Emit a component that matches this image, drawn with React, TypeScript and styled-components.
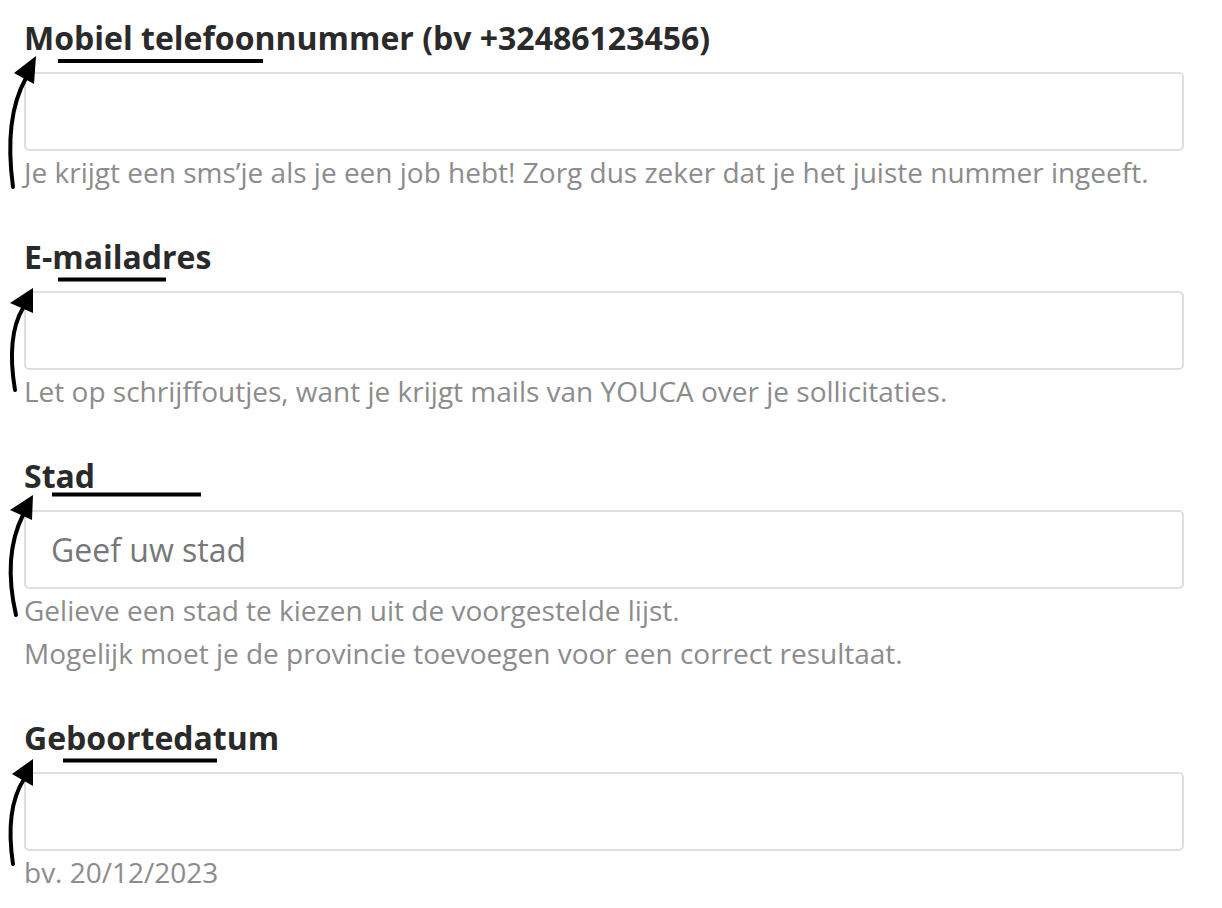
import React from "react";
import styled, { createGlobalStyle } from "styled-components";

const GlobalStyle = createGlobalStyle`
  html, body { margin: 0; padding: 0; background: #ffffff; }
  body { font-family: "Open Sans", "Noto Sans", sans-serif; }
  * { box-sizing: border-box; }
`;

const Page = styled.div`
  width: 1222px;
  padding: 20px 38px 0 24px;
  display: flex;
  flex-direction: column;
  gap: 45px;
`;

const Field = styled.div`
  position: relative;
  display: flex;
  flex-direction: column;
`;

const Label = styled.label`
  font-size: 32px;
  line-height: 36px;
  font-weight: 700;
  color: #2a2a2a;
  margin-bottom: 16px;
  white-space: nowrap;
`;

const Input = styled.input`
  height: 79px;
  width: 100%;
  border: 2px solid #dfdfdf;
  border-radius: 5px;
  padding: 0 25px;
  font-family: "Open Sans", "Noto Sans", sans-serif;
  font-size: 32px;
  color: #333;
  background: #fff;
  outline: none;
  &::placeholder { color: #777777; }
`;

const Help = styled.div`
  font-size: 28px;
  line-height: 43px;
  color: #8c8c8c;
  white-space: nowrap;
`;

const Annotation = styled.svg`
  position: absolute;
  left: -24px;
  top: 0;
  width: 300px;
  height: 180px;
  overflow: visible;
  pointer-events: none;
`;

type Ann = {
  shaft: string;
  head: string;
  ul: [number, number, number];
};

const Arrow: React.FC<{ a: Ann }> = ({ a }) => (
  <Annotation viewBox="0 0 300 180">
    <line x1={a.ul[0]} x2={a.ul[1]} y1={a.ul[2]} y2={a.ul[2]} stroke="#000" strokeWidth={4} />
    <path d={a.shaft} stroke="#000" strokeWidth={4} fill="none" strokeLinecap="round" />
    <polygon points={a.head} fill="#000" />
  </Annotation>
);

const fields: {
  label: string;
  placeholder?: string;
  help: string[];
  ann: Ann;
}[] = [
  {
    label: "Mobiel telefoonnummer (bv +32486123456)",
    help: ["Je krijgt een sms\u2019je als je een job hebt! Zorg dus zeker dat je het juiste nummer ingeeft."],
    ann: {
      shaft: "M13 167 C8 130, 8 90, 26 58",
      head: "36,36 14,53 34,64",
      ul: [58, 263, 41],
    },
  },
  {
    label: "E-mailadres",
    help: ["Let op schrijffoutjes, want je krijgt mails van YOUCA over je sollicitaties."],
    ann: {
      shaft: "M15 151 C10 121, 10 91, 23 69",
      head: "33,49 10,64 33,74",
      ul: [58, 166, 40.5],
    },
  },
  {
    label: "Stad",
    placeholder: "Geef uw stad",
    help: [
      "Gelieve een stad te kiezen uit de voorgestelde lijst.",
      "Mogelijk moet je de provincie toevoegen voor een correct resultaat.",
    ],
    ann: {
      shaft: "M16 157 C8 122, 8 87, 23 57",
      head: "33,37 10,52 32,62",
      ul: [52, 201, 36.5],
    },
  },
  {
    label: "Geboortedatum",
    help: ["bv. 20/12/2023"],
    ann: {
      shaft: "M13 144 C8 111, 10 81, 24 59",
      head: "33,39 12,54 33,66",
      ul: [63, 217, 40.5],
    },
  },
];

export default function App() {
  return (
    <>
      <GlobalStyle />
      <Page>
        {fields.map((f) => (
          <Field key={f.label}>
            <Label>{f.label}</Label>
            <Input type="text" placeholder={f.placeholder} />
            {f.help.map((h) => (
              <Help key={h}>{h}</Help>
            ))}
            <Arrow a={f.ann} />
          </Field>
        ))}
      </Page>
    </>
  );
}
